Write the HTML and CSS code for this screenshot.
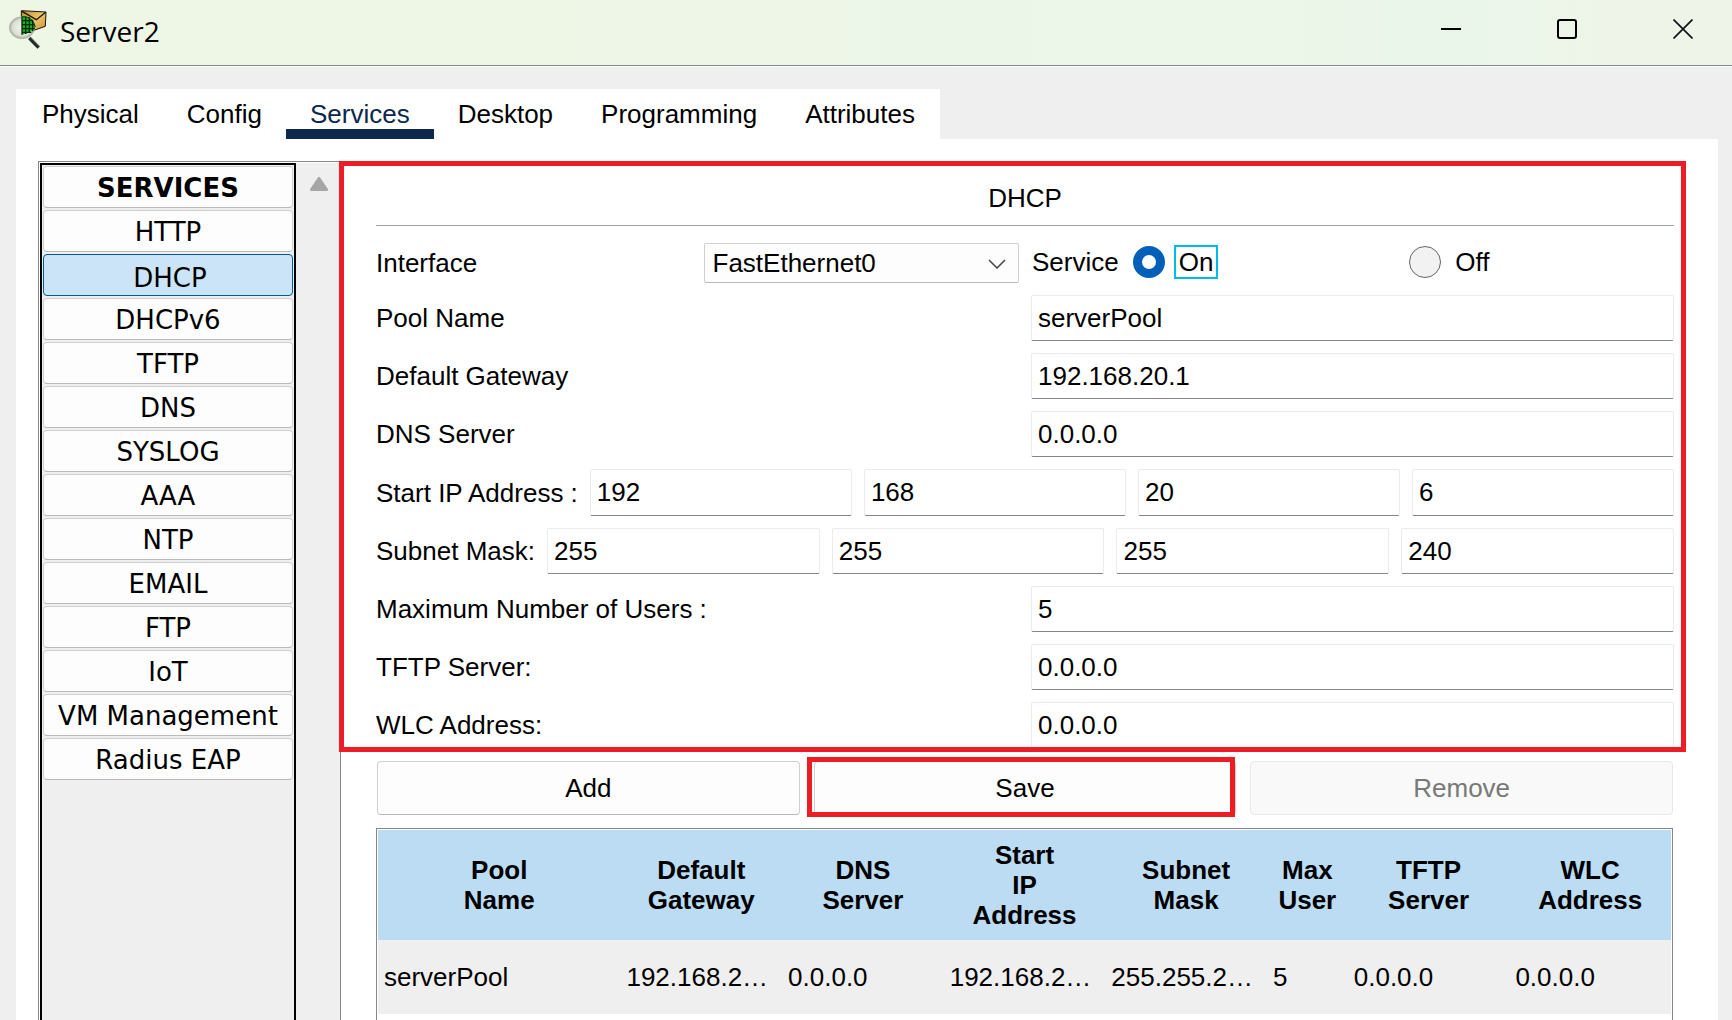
FILE: index.html
```html
<!DOCTYPE html>
<html lang="en">
<head>
<meta charset="utf-8">
<title>Server2</title>
<meta name="viewport" content="width=device-width, initial-scale=1">
<link rel="stylesheet" href="styles.css">
</head>
<body>
<header class="titlebar">
  <svg class="app-icon" viewBox="24 30 120 120" aria-hidden="true">
    <defs>
      <linearGradient id="paper" x1="0" y1="0" x2="1" y2="1"><stop offset="0" stop-color="#b98a2c"/><stop offset=".5" stop-color="#efc565"/><stop offset="1" stop-color="#c58c36"/></linearGradient>
      <radialGradient id="lens"><stop offset="0" stop-color="#f4f5ee"/><stop offset=".75" stop-color="#dcdfd3"/><stop offset="1" stop-color="#a3a79c"/></radialGradient>
    </defs>
    <path d="M64 35 138 39 136 82 90 98 64 90Z" fill="url(#paper)" stroke="#1b1607" stroke-width="3"/>
    <path d="M66 37 109 62 137 40" fill="none" stroke="#1b1607" stroke-width="4"/>
    <ellipse cx="66" cy="86" rx="38" ry="33" fill="url(#lens)" stroke="#b4b7ab" stroke-width="2"/>
    <path d="M66 53Q98 50 106 84Q102 99 66 107Z" fill="#12b51c"/>
    <path d="M66 53V107M77 53V105M88 55V102M98 62V97M66 65H98M66 77H104M66 89H105M66 100H94" fill="none" stroke="#04260a" stroke-width="4"/>
    <path d="M66 53Q98 50 106 84" fill="none" stroke="#0a3a0e" stroke-width="3"/>
    <path d="M88 117 116 146" stroke="#26282a" stroke-width="10"/>
    <path d="M94 117 119 142" stroke="#8c9089" stroke-width="2"/>
  </svg>
  <h1 class="window-title">Server2</h1>
  <div class="window-controls">
    <button class="window-button" type="button" aria-label="Minimize"><svg viewBox="0 0 20 20"><path d="M0 10H20" stroke="#000" stroke-width="2"/></svg></button>
    <button class="window-button" type="button" aria-label="Maximize"><svg viewBox="0 0 20 20"><rect x="1" y="1" width="18" height="18" rx="2" fill="none" stroke="#000" stroke-width="2"/></svg></button>
    <button class="window-button" type="button" aria-label="Close"><svg viewBox="0 0 20 20"><path d="M.5.5 19.500 19.500M19.500.5.5 19.500" stroke="#111418" stroke-width="1.700"/></svg></button>
  </div>
</header>

<main class="workspace">
  <nav class="tabs" aria-label="Device">
    <a class="tab" href="#physical">Physical</a>
    <a class="tab" href="#config">Config</a>
    <a class="tab tab-active" href="#services" aria-current="page">Services</a>
    <a class="tab" href="#desktop">Desktop</a>
    <a class="tab" href="#programming">Programming</a>
    <a class="tab" href="#attributes">Attributes</a>
  </nav>

  <div class="panel">
    <aside class="sidebar">
      <div class="service-list">
        <h2 class="service service-heading">SERVICES</h2>
        <button class="service" type="button">HTTP</button>
        <button class="service service-active" type="button">DHCP</button>
        <button class="service" type="button">DHCPv6</button>
        <button class="service" type="button">TFTP</button>
        <button class="service" type="button">DNS</button>
        <button class="service" type="button">SYSLOG</button>
        <button class="service" type="button">AAA</button>
        <button class="service" type="button">NTP</button>
        <button class="service" type="button">EMAIL</button>
        <button class="service" type="button">FTP</button>
        <button class="service" type="button">IoT</button>
        <button class="service" type="button">VM Management</button>
        <button class="service" type="button">Radius EAP</button>
      </div>
      <div class="scroll-track">
        <svg class="scroll-arrow" viewBox="0 0 18 14" aria-hidden="true"><path d="M9 1.500 16.500 12.500H1.500Z" fill="#a6a6a6" stroke="#a6a6a6" stroke-width="3" stroke-linejoin="round"/></svg>
      </div>
    </aside>

    <form class="detail">
      <section class="settings">
        <h2 class="settings-title">DHCP</h2>
        <div class="rows">
          <div class="row row-service">
            <div class="half">
              <label for="interface">Interface</label>
              <div class="select-wrap">
                <select class="select" id="interface"><option>FastEthernet0</option></select>
                <svg class="chevron" viewBox="0 0 18 10" aria-hidden="true"><path d="M1 1 9 9 17 1" fill="none" stroke="#444" stroke-width="1.500"/></svg>
              </div>
            </div>
            <div class="service-state" role="radiogroup" aria-labelledby="service-label">
              <span id="service-label">Service</span>
              <div class="half">
                <div class="choice"><input class="radio" type="radio" name="state" id="on" checked><label class="choice-label choice-focus" for="on">On</label></div>
                <div class="choice"><input class="radio" type="radio" name="state" id="off"><label class="choice-label" for="off">Off</label></div>
              </div>
            </div>
          </div>
          <div class="row"><label for="pool">Pool Name</label><input class="field" id="pool" type="text" value="serverPool"></div>
          <div class="row"><label for="gateway">Default Gateway</label><input class="field" id="gateway" type="text" value="192.168.20.1"></div>
          <div class="row"><label for="dns">DNS Server</label><input class="field" id="dns" type="text" value="0.0.0.0"></div>
          <div class="octets octets-start">
            <label for="start1">Start IP Address :</label>
            <input class="field" id="start1" type="text" value="192">
            <input class="field" type="text" value="168" aria-label="Start IP Address, second part">
            <input class="field" type="text" value="20" aria-label="Start IP Address, third part">
            <input class="field" type="text" value="6" aria-label="Start IP Address, fourth part">
          </div>
          <div class="octets">
            <label for="mask1">Subnet Mask:</label>
            <input class="field" id="mask1" type="text" value="255">
            <input class="field" type="text" value="255" aria-label="Subnet Mask, second part">
            <input class="field" type="text" value="255" aria-label="Subnet Mask, third part">
            <input class="field" type="text" value="240" aria-label="Subnet Mask, fourth part">
          </div>
          <div class="row"><label for="users">Maximum Number of Users :</label><input class="field" id="users" type="text" value="5"></div>
          <div class="row"><label for="tftp">TFTP Server:</label><input class="field" id="tftp" type="text" value="0.0.0.0"></div>
          <div class="row"><label for="wlc">WLC Address:</label><input class="field" id="wlc" type="text" value="0.0.0.0"></div>
        </div>
      </section>

      <div class="actions">
        <div class="action"><button class="button" type="button">Add</button></div>
        <div class="action action-marked"><button class="button" type="button">Save</button></div>
        <div class="action"><button class="button" type="button" disabled>Remove</button></div>
      </div>

      <div class="pools">
        <table class="pool-table">
          <colgroup><col class="col-name"><col class="col-wide"><col class="col-wide"><col class="col-wide"><col class="col-wide"><col class="col-narrow"><col class="col-wide"><col class="col-wide"></colgroup>
          <thead>
            <tr><th>Pool<br>Name</th><th>Default<br>Gateway</th><th>DNS<br>Server</th><th>Start<br>IP<br>Address</th><th>Subnet<br>Mask</th><th>Max<br>User</th><th>TFTP<br>Server</th><th>WLC<br>Address</th></tr>
          </thead>
          <tbody>
            <tr><td>serverPool</td><td>192.168.2…</td><td>0.0.0.0</td><td>192.168.2…</td><td>255.255.2…</td><td>5</td><td>0.0.0.0</td><td>0.0.0.0</td></tr>
          </tbody>
        </table>
      </div>
    </form>
  </div>
</main>
</body>
</html>
```
FILE: styles.css
```css
* { box-sizing: border-box; }

body {
  margin: 0;
  min-height: 100vh;
  display: flex;
  flex-direction: column;
  background: #efefef;
  color: #000;
  font: 26px/30px "Liberation Sans", Arial, sans-serif;
}

button, input, select { font: inherit; color: inherit; }
h1, h2 { margin: 0; font: inherit; }

/* Title bar */
.titlebar {
  display: flex;
  align-items: center;
  height: 66px;
  padding: 0 1px 8px 8px;
  background: linear-gradient(90deg, #eef6e5, #eef6e6 30%, #ecf6e8 55%, #ebf6ea 85%, #eef5e8 93%);
  border-bottom: 1px solid #84888b;
  box-shadow: 0 1px #fff;
}
.app-icon { width: 40px; height: 40px; }
.window-title {
  margin-left: 12px;
  padding-top: 4px;
  font: 28px/36px "Open Sans", "Noto Sans", sans-serif;
}
.window-controls { display: flex; gap: 20px; margin-left: auto; }
.window-button {
  display: flex;
  align-items: center;
  justify-content: center;
  width: 96px;
  height: 56px;
  padding: 0;
  border: 0;
  background: none;
}
.window-button svg { width: 20px; height: 20px; }

/* Tabs */
.workspace {
  flex: 1;
  display: flex;
  flex-direction: column;
  margin: 23px 14px 0 16px;
}
.tabs {
  display: flex;
  align-self: flex-start;
  padding: 0 1px 0 2px;
  background: #fff;
}
.tab {
  height: 50px;
  padding: 10px 24px 0;
  color: #000;
  text-decoration: none;
}
.tab-active {
  color: #0d274d;
  border-bottom: 10px solid #0d274d;
}

.panel {
  flex: 1;
  display: flex;
  padding: 22px 32px 0 22px;
  background: #fff;
}

/* Service list */
.sidebar {
  display: flex;
  flex: none;
  padding: 1px 0 0 1px;
  border: solid #84888b;
  border-width: 1px 0 0 1px;
}
.service-list {
  display: flex;
  flex-direction: column;
  gap: 2px;
  width: 256px;
  padding: 1px;
  border: 2px solid #000;
  border-bottom: 0;
  background: #efefef;
}
.service {
  height: 42px;
  padding: 2px 0 0;
  border: 1px solid #d0d0d0;
  border-bottom-color: #bababa;
  border-radius: 4px;
  background: #fdfdfd;
  font: 26px/38px "DejaVu Sans", Verdana, sans-serif;
  text-align: center;
}
.service-heading { font-weight: 700; }
.service-active {
  padding: 4px 0 0 4px;
  border-color: #005a9e;
  background: #cce4f7;
}
.scroll-track {
  width: 44px;
  padding: 14px 0 0 14px;
  background: #efefef;
}
.scroll-arrow { display: block; width: 18px; height: 14px; }

/* DHCP settings */
.detail {
  flex: 1;
  min-width: 0;
  display: flex;
  flex-direction: column;
  border-left: 1px solid #84888b;
}
.settings {
  position: relative;
  padding: 0 12px 4px 35px;
}
.settings::after {
  content: "";
  position: absolute;
  inset: 0 0 0 -2px;
  border: 5px solid #ee1c24;
  pointer-events: none;
}
.settings-title {
  padding: 22px 0 12px;
  border-bottom: 1px solid #a0a0a0;
  text-align: center;
}
.rows { display: grid; gap: 12px; margin-top: 17px; }
.row, .half {
  display: grid;
  grid-template-columns: 1fr 1fr;
  align-items: center;
  gap: 12px;
}
.half { flex: 1; }
.select-wrap { position: relative; }
.select {
  display: block;
  width: 100%;
  height: 40px;
  padding: 0 32px 0 8px;
  appearance: none;
  border: 1px solid #d0d0d0;
  border-bottom-color: #bababa;
  border-radius: 2px;
  background: #fdfdfd;
}
.chevron {
  position: absolute;
  top: 16px;
  right: 13px;
  width: 18px;
  height: 10px;
  pointer-events: none;
}
.service-state, .choice { display: flex; align-items: center; }
.service-state { gap: 14px; padding: 0 0 2px 1px; }
.choice { gap: 9px; }
.radio {
  width: 32px;
  height: 32px;
  margin: 0;
  appearance: none;
  border: 1px solid #666;
  border-radius: 50%;
  background: #f2f2f2;
}
.radio:checked { border: 9px solid #005fb8; background: #fff; }
.choice-label { padding: 0 3px; border: 2px solid transparent; }
.choice-focus { border-color: #00bce8; }
.field {
  width: 100%;
  min-width: 0;
  height: 46px;
  padding: 0 6px;
  border: 1px solid #ebebeb;
  border-bottom-color: #858585;
  border-radius: 2px;
  background: #fff;
}
.octets { display: flex; align-items: center; gap: 12px; }
.octets label { flex: none; }
.octets .field { flex: 1; }
.octets-start .field { height: 47px; }

/* Buttons */
.actions {
  display: grid;
  grid-template-columns: repeat(3, 1fr);
  gap: 14px;
  margin: 9px 13px 0 36px;
}
.action { position: relative; }
.action-marked::after {
  content: "";
  position: absolute;
  inset: -4px 1px -2px -7px;
  border: 5px solid #ee1c24;
  pointer-events: none;
}
.button {
  display: block;
  width: 100%;
  height: 54px;
  border: 1px solid #d0d0d0;
  border-bottom-color: #bababa;
  border-radius: 4px;
  background: #fdfdfd;
}
.button:disabled {
  border-color: #e8e8e8;
  background: #f9f9f9;
  color: #787878;
}

/* Pool table */
.pools {
  flex: 1;
  margin: 13px 13px 0 35px;
  padding: 1px;
  border: 1px solid #84888b;
  border-bottom: 0;
}
.pool-table {
  width: 100%;
  table-layout: fixed;
  border-collapse: collapse;
}
.col-name { width: 18.75%; }
.col-wide { width: 12.5%; }
.col-narrow { width: 6.25%; }
.pool-table th {
  height: 110px;
  padding: 0;
  background: #bbdcf3;
  font-weight: 700;
}
.pool-table td {
  height: 74px;
  padding: 0 6px;
  background: #efefef;
  white-space: nowrap;
}
```
